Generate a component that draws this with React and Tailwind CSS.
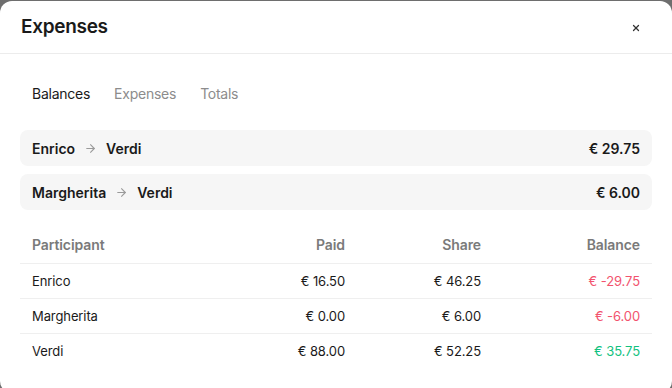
import { ArrowRight, X } from 'lucide-react';

const balances = [
    { from: 'Enrico', to: 'Verdi', amount: '€ 29.75' },
    { from: 'Margherita', to: 'Verdi', amount: '€ 6.00' },
];

const rows = [
    { name: 'Enrico', paid: '€ 16.50', share: '€ 46.25', balance: '€ -29.75', neg: true },
    { name: 'Margherita', paid: '€ 0.00', share: '€ 6.00', balance: '€ -6.00', neg: true },
    { name: 'Verdi', paid: '€ 88.00', share: '€ 52.25', balance: '€ 35.75', neg: false },
];

const cols = 'grid grid-cols-[201px_136px_136px_159px]';

export default function App() {
    return (
        <div className="w-[672px] h-[388px] bg-[#6e6e6e] pt-px overflow-hidden font-['Inter',sans-serif]">
            <div className="h-[392px] bg-white rounded-xl flex flex-col">
                {/* Header */}
                <div className="h-[53px] flex items-center justify-between pl-[21px] pr-[31px] pt-px border-b border-[#ececec]">
                    <h2 className="text-[19px] font-semibold text-[#1a1a1a] tracking-[-0.3px]">Expenses</h2>
                    <button className="text-[#333]">
                        <X size={10} strokeWidth={3} />
                    </button>
                </div>

                <div className="px-5 pt-[26px]">
                    {/* Tabs */}
                    <div className="flex text-[14px] h-[26px] items-center tracking-[-0.25px]">
                        <span className="px-3 text-[#1a1a1a]">Balances</span>
                        <span className="px-3 text-[#8c8c8c]">Expenses</span>
                        <span className="px-3 text-[#8c8c8c]">Totals</span>
                    </div>

                    {/* Settlements */}
                    <div className="mt-6 flex flex-col gap-2">
                        {balances.map((b) => (
                            <div key={b.from} className="h-9 px-3 rounded-lg bg-[#f6f6f6] flex items-center justify-between text-[14px] font-semibold text-[#1a1a1a]">
                                <div className="flex items-center gap-[9px]">
                                    <span>{b.from}</span>
                                    <ArrowRight size={13} className="text-[#9a9a9a]" />
                                    <span>{b.to}</span>
                                </div>
                                <span>{b.amount}</span>
                            </div>
                        ))}
                    </div>

                    {/* Table */}
                    <div className="mt-4 text-[13px] tracking-[-0.1px]">
                        <div className={`${cols} h-[38px] items-center border-b border-[#efefef] text-[14px] font-semibold text-[#7a7a7a]`}>
                            <span className="px-3">Participant</span>
                            <span className="px-3 text-right">Paid</span>
                            <span className="px-3 text-right">Share</span>
                            <span className="px-3 text-right">Balance</span>
                        </div>
                        {rows.map((r, i) => (
                            <div key={r.name} className={`${cols} h-[35px] pt-px items-center text-[#1a1a1a] ${i < rows.length - 1 ? 'border-b border-[#efefef]' : ''}`}>
                                <span className="px-3">{r.name}</span>
                                <span className="px-3 text-right">{r.paid}</span>
                                <span className="px-3 text-right">{r.share}</span>
                                <span className={`px-3 text-right ${r.neg ? 'text-[#f2536e]' : 'text-[#12c27f]'}`}>{r.balance}</span>
                            </div>
                        ))}
                    </div>
                </div>
            </div>
        </div>
    );
}
